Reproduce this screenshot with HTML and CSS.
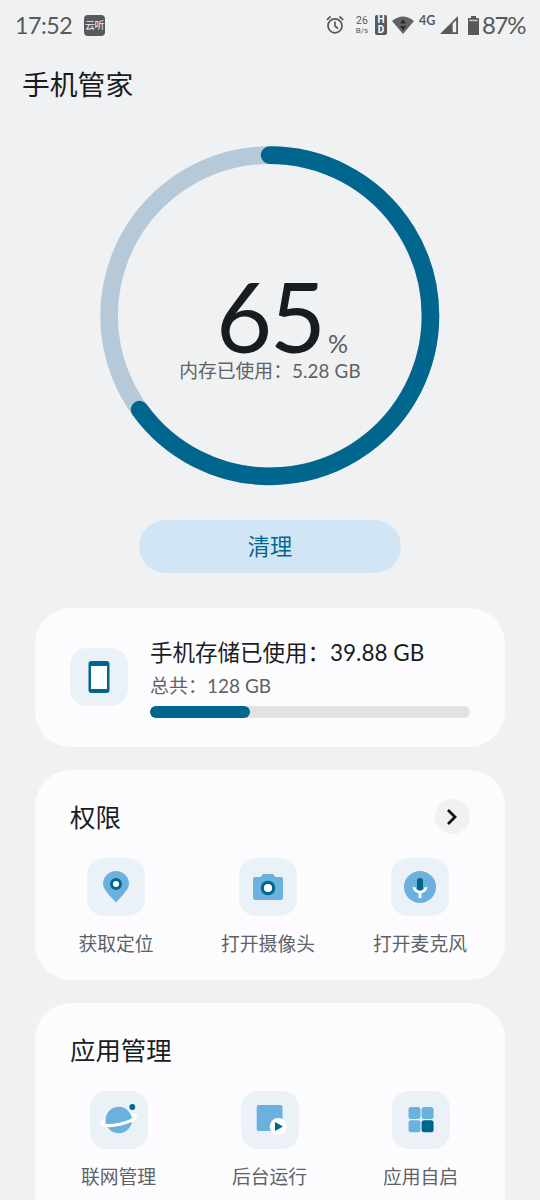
FILE: index.html
```html
<!DOCTYPE html>
<html lang="zh-CN">
<head>
<meta charset="utf-8">
<title>手机管家</title>
<link rel="stylesheet" href="styles.css">
</head>
<body>
<div class="screen">
  <header class="status">
    <div class="status-left">
      <span class="clock">17:52</span>
      <span class="app-badge">云听</span>
    </div>
    <div class="status-right">
      <svg class="alarm" width="18" height="20" viewBox="0 0 18 20" fill="none" stroke="#58595b" stroke-width="1.7"><circle cx="9" cy="10.8" r="7"/><path d="M9 6.500V11l3 2.600M.8 4.800 4.600 1.500M17.200 4.800l-3.800-3.300"/></svg>
      <span class="speed"><span class="speed-num">26</span><span class="speed-unit">B/s</span></span>
      <span class="hd"><span>H</span><span>D</span></span>
      <svg class="wifi" width="22" height="18" viewBox="0 0 22 18"><path d="M0 5Q11-4 22 5L11 18Z" fill="#626365"/><path d="M8 7.500h6L11 3ZM8 10h6l-3 4.500Z" fill="#2c2d2f"/></svg>
      <span class="net">4G</span>
      <svg class="signal" width="18" height="18" viewBox="0 0 18 18"><path d="M18 0v18H0Z" fill="#58595b"/><path d="M12.700 7.700 16.200 4.200v12h-3.500Z" fill="#eff1f3"/></svg>
      <svg class="battery" width="11" height="19" viewBox="0 0 11 19"><path d="M3 0h5v2h3v17H0V2h3Z" fill="#58595b"/><path d="M1.300 3.700h8.400v1.500H1.300Z" fill="#c9cacc"/></svg>
      <span class="level">87%</span>
    </div>
  </header>

  <h1 class="title">手机管家</h1>

  <section class="gauge">
    <svg class="ring" width="340" height="340" viewBox="0 0 340 340" fill="none" stroke-width="17.600">
      <circle cx="169.700" cy="169.700" r="160.600" stroke="#b6c9d9"/>
      <path d="M169.500 9.100A160.600 160.600 0 1 1 39.600 263.600" stroke="#00668d" stroke-linecap="round"/>
    </svg>
    <div class="gauge-text">
      <div class="percent"><span class="value">65</span><span class="sign">%</span></div>
      <div class="memory">内存已使用：<span class="memory-num">5.28 GB</span></div>
    </div>
  </section>

  <button class="clean">清理</button>

  <section class="card storage">
    <div class="tile">
      <svg width="22" height="34" viewBox="0 0 22 34"><rect x=".5" y="1" width="21" height="32" rx="3" fill="#00668d"/><path d="M3 6h16v23H3Z" fill="#fff"/></svg>
    </div>
    <div class="storage-info">
      <div class="storage-used">手机存储已使用：<span class="used-num">39.88 GB</span></div>
      <div class="storage-total">总共：<span class="total-num">128 GB</span></div>
      <div class="bar"><div class="bar-fill" style="width:31.2%"></div></div>
    </div>
  </section>

  <section class="card permissions">
    <div class="card-head">
      <h2>权限</h2>
      <span class="more"><svg width="14" height="18" viewBox="0 0 14 18" fill="none" stroke="#111316" stroke-width="2.800"><path d="m2 2 7 7-7 7"/></svg></span>
    </div>
    <div class="grid">
      <div class="item">
        <div class="tile"><svg width="38" height="38" viewBox="0 0 38 38"><path d="M19 34.500C14 29 6 21.500 6 16a13 13 0 0 1 26 0c0 5.500-8 13-13 18.500Z" fill="#6bb1de"/><circle cx="19" cy="16" r="4.500" fill="#fff" stroke="#00668d" stroke-width="2.900"/></svg></div>
        <span>获取定位</span>
      </div>
      <div class="item">
        <div class="tile"><svg width="38" height="38" viewBox="0 0 38 38"><path d="M6 9h5.500l2.500-3h10l2.500 3H32q2 0 2 2v19q0 2-2 2H6q-2 0-2-2V11q0-2 2-2Z" fill="#6bb1de"/><circle cx="19" cy="20" r="5.700" fill="#fff" stroke="#00668d" stroke-width="3.200"/></svg></div>
        <span>打开摄像头</span>
      </div>
      <div class="item">
        <div class="tile"><svg width="38" height="38" viewBox="0 0 38 38"><circle cx="19" cy="19" r="16" fill="#6bb1de"/><path d="M12.900 19.200a6.200 5.800 0 0 0 12.200 0M19 24.500V30" fill="none" stroke="#fff" stroke-width="2.800"/><rect x="16" y="10" width="6" height="12.500" rx="3" fill="#00668d"/></svg></div>
        <span>打开麦克风</span>
      </div>
    </div>
  </section>

  <section class="card apps">
    <div class="card-head"><h2>应用管理</h2></div>
    <div class="grid">
      <div class="item">
        <div class="tile"><svg width="40" height="38" viewBox="0 0 40 38"><g fill="none" stroke="#fff"><ellipse cx="19.800" cy="19" rx="17.300" ry="4.300" stroke-width="2.800" transform="rotate(-12 19.800 19)"/></g><circle cx="19.700" cy="19" r="13.200" fill="#6bb1de"/><path d="M2.500 19a17.300 4.300 0 0 0 34.600 0" fill="none" stroke="#fff" stroke-width="3.200" transform="rotate(-12 19.800 19)"/><circle cx="33.300" cy="6" r="2.900" fill="#00668d"/></svg></div>
        <span>联网管理</span>
      </div>
      <div class="item">
        <div class="tile"><svg width="38" height="38" viewBox="0 0 38 38"><rect x="5.700" y="4" width="25.800" height="26" rx="2" fill="#6bb1de"/><circle cx="27.200" cy="25.500" r="8.500" fill="#fff"/><path d="m24 21 8 4.500-8 4.500Z" fill="#00668d"/></svg></div>
        <span>后台运行</span>
      </div>
      <div class="item">
        <div class="tile"><svg width="38" height="38" viewBox="0 0 38 38" fill="#6bb1de"><rect x="6.500" y="6" width="12" height="12" rx="2.500"/><rect x="19.600" y="6" width="12" height="12" rx="2.500"/><rect x="6.500" y="19.200" width="12" height="12" rx="2.500"/><rect x="19.600" y="19.200" width="12" height="12" rx="2.500" fill="#00668d"/></svg></div>
        <span>应用自启</span>
      </div>
    </div>
  </section>
</div>
</body>
</html>
```

FILE: styles.css
```css
* { box-sizing: border-box; }
body {
  margin: 0;
  background: #eff1f3;
  color: #191c1e;
  font-family: Lato, "Noto Sans CJK SC", sans-serif;
}
.screen { height: 1200px; overflow: hidden; display: flex; flex-direction: column; align-items: center; }
.screen > * { flex: none; }
svg { display: block; flex: none; }

.status { width: 100%; height: 50px; padding: 0 14px 0 15px; display: flex; justify-content: space-between; align-items: center; color: #58595b; }
.status-left, .status-right { display: flex; align-items: center; }
.clock { font-size: 23.2px; line-height: 30px; width: 69px; letter-spacing: -0.5px; white-space: nowrap; }
.app-badge { width: 21px; height: 21px; border-radius: 4px; background: #58595b; color: #eff1f3; font-size: 10px; line-height: 20px; text-align: center; letter-spacing: -0.5px; }
.alarm { margin: -1px 11px 0 0; }
.speed { width: 14px; margin-right: 6px; display: flex; flex-direction: column; align-items: center; font-family: Roboto, sans-serif; }
.speed-num { font-size: 10.5px; line-height: 11px; }
.speed-unit { font-size: 8px; line-height: 9px; }
.hd { width: 12px; height: 20px; border-radius: 2px; background: #58595b; color: #fff; display: flex; flex-direction: column; align-items: center; font: bold 10px/10px Roboto, sans-serif; }
.wifi { margin-left: 5px; }
.net { font: bold 12.5px/14px Lato, sans-serif; margin: -8px 4px 0 5px; width: 17px; }
.battery { margin: 0 3px 0 10px; }
.level { font-size: 24px; line-height: 30px; width: 44px; letter-spacing: -1.3px; white-space: nowrap; }

.title { margin: 14px 0 0; padding-left: 22px; width: 100%; font-size: 27.8px; line-height: 42px; font-weight: 400; }

.gauge { width: 340px; height: 340px; margin-top: 40px; display: grid; }
.ring, .gauge-text { grid-area: 1 / 1; }
.gauge-text { padding-top: 134px; display: flex; flex-direction: column; align-items: center; }
.percent { width: 136px; height: 80px; padding-left: 14px; display: flex; align-items: baseline; line-height: 72px; white-space: nowrap; }
.value { font-size: 97px; font-weight: 400; width: 112px; flex: none; letter-spacing: -2.5px; }
.sign { font-size: 25px; color: #5b5e61; line-height: 24px; }
.memory { font-size: 18.8px; line-height: 22px; color: #5f6265; white-space: nowrap; }
.memory-num { letter-spacing: 0.15px; }

.clean { width: 262px; height: 53px; margin: 34px 0 0; padding: 0; border: 0; border-radius: 27px; background: #d2e5f5; color: #00668d; font: 22.2px/53px Lato, "Noto Sans CJK SC", sans-serif; }

.card { width: 470px; background: #fcfcff; border-radius: 36px; }
.storage { height: 139px; margin-top: 35px; padding: 0 35px; display: flex; }
.tile { width: 58px; height: 58px; flex: none; border-radius: 17px; background: #eaf2f8; display: flex; justify-content: center; align-items: center; }
.storage .tile { margin-top: 40px; }
.storage-info { flex: 1; margin-left: 22px; padding-top: 27px; white-space: nowrap; }
.storage-used { font-size: 22.5px; line-height: 36px; }
.storage-total { margin-top: 1px; font-size: 19px; line-height: 28px; color: #5f6265; }
.bar { height: 12px; margin-top: 6px; border-radius: 6px; background: #e1e2e4; }
.bar-fill { height: 12px; border-radius: 6px; background: #00668d; }

.permissions { height: 210px; margin-top: 23px; }
.apps { height: 240px; margin-top: 23px; }
.card-head { height: 88px; padding: 5px 35px 0; display: flex; align-items: center; justify-content: space-between; }
h2 { margin: 0; font-size: 25.4px; line-height: 36px; font-weight: 400; }
.more { width: 35px; height: 35px; border-radius: 50%; background: #eff1f3; display: flex; align-items: center; justify-content: center; }
.grid { width: 456px; margin-left: 5px; display: grid; grid-template-columns: repeat(3, 1fr); }
.apps .grid { width: 453px; margin-left: 8px; }
.item { display: flex; flex-direction: column; align-items: center; font-size: 18.8px; line-height: 28px; color: #5f6265; white-space: nowrap; }
.item .tile { margin-bottom: 14px; }
```
